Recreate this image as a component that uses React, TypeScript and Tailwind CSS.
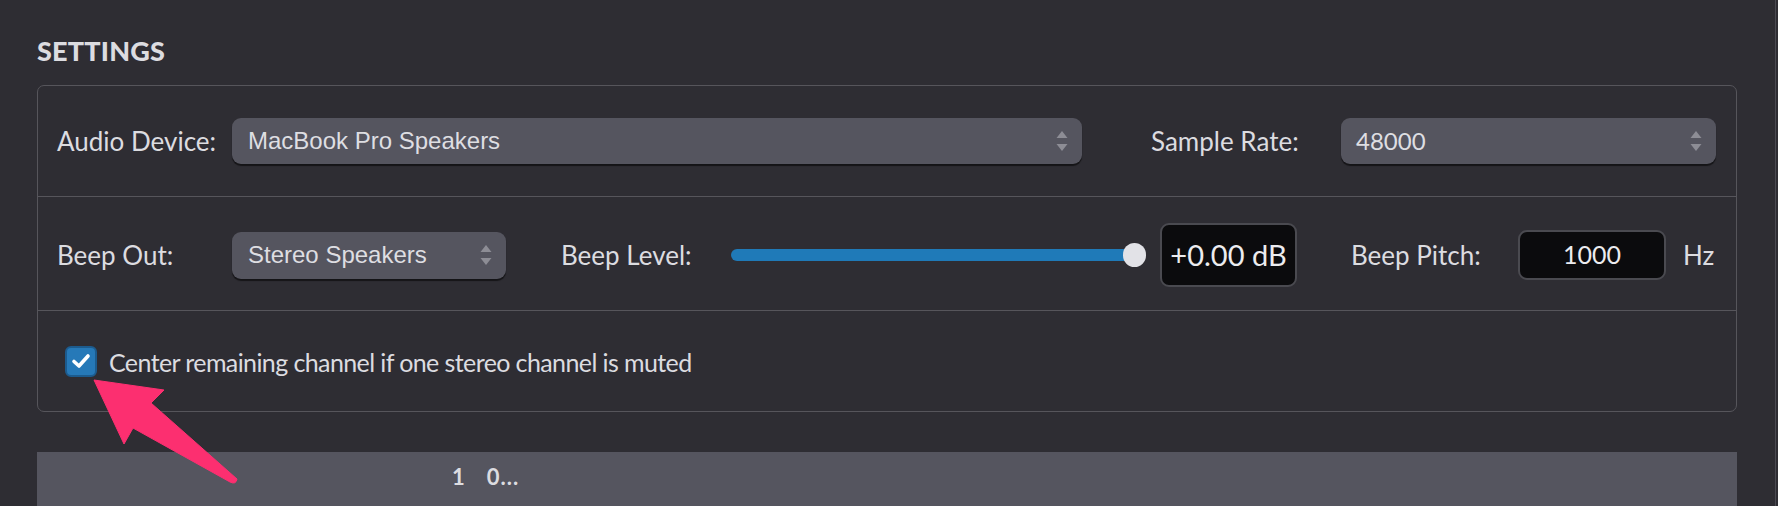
import React from "react";

const labelFont = { fontFamily: "Lato, 'Noto Sans', sans-serif" } as const;
const selFont = { fontFamily: "'Liberation Sans', Arial, sans-serif" } as const;

function Arrows() {
  return (
    <svg width="12" height="24" viewBox="0 0 12 24" className="shrink-0">
      <path d="M6 2 L11.5 9 L0.5 9 Z" fill="#8d8d95" />
      <path d="M0.5 15 L11.5 15 L6 22 Z" fill="#8d8d95" />
    </svg>
  );
}

function Select({ w, h, text, font }: { w: string; h: string; text: string; font: React.CSSProperties }) {
  return (
    <div
      className={`${w} ${h} shrink-0 rounded-[9px] bg-[#55555f] shadow-[0_2px_1px_rgba(0,0,0,0.55)] flex items-center justify-between pl-[16px] pr-[14px]`}
    >
      <span className="text-[24px] text-[#dedee2] leading-none" style={font}>
        {text}
      </span>
      <Arrows />
    </div>
  );
}

export default function App() {
  return (
    <div className="w-[1778px] h-[506px] overflow-hidden bg-[#2e2d33] relative flex" style={labelFont}>
      <div className="w-[1776px] h-full border-r border-[#4c4b52] pl-[37px] pt-[35px] flex flex-col">
        <div className="text-[27px] leading-[32px] font-black text-[#dcdce0] tracking-[0.2px]">SETTINGS</div>

        <div className="mt-[18px] w-[1700px] rounded-[7px] border border-[#56555b] flex flex-col text-[#dcdce0]">
          {/* Row 1 */}
          <div className="h-[111px] border-b border-[#56555b] flex items-center pl-[19px]">
            <div className="w-[175px] shrink-0 text-[26px]">Audio Device:</div>
            <Select w="w-[850px]" h="h-[46px]" text="MacBook Pro Speakers" font={selFont} />
            <div className="ml-[69px] w-[190px] shrink-0 text-[26px]">Sample Rate:</div>
            <div className="w-[375px] h-[46px] shrink-0 rounded-[9px] bg-[#55555f] shadow-[0_2px_1px_rgba(0,0,0,0.55)] flex items-center justify-between pl-[15px] pr-[14px]">
              <span className="text-[24px] text-[#dedee2] leading-none">48000</span>
              <Arrows />
            </div>
          </div>

          {/* Row 2 */}
          <div className="h-[114px] border-b border-[#56555b] flex items-center pl-[19px] pt-[3px]">
            <div className="w-[175px] shrink-0 text-[26px]">Beep Out:</div>
            <Select w="w-[274px]" h="h-[47px]" text="Stereo Speakers" font={selFont} />
            <div className="ml-[55px] w-[170px] shrink-0 text-[26px]">Beep Level:</div>
            <div className="w-[415px] h-[24px] shrink-0 flex items-center">
              <div className="flex-1 h-[12px] rounded-full bg-[#1f7ab8]" />
              <div className="w-[23px] h-[24px] rounded-full bg-[#e2e2e7] -ml-[11px]" />
            </div>
            <div className="ml-[14px] w-[137px] h-[64px] shrink-0 rounded-[9px] border-2 border-[#4a4a50] bg-[#0b0b0d] flex items-center justify-center text-[29px] text-[#ececef]">
              +0.00 dB
            </div>
            <div className="ml-[54px] w-[167px] shrink-0 text-[26px]">Beep Pitch:</div>
            <div className="w-[148px] h-[50px] shrink-0 rounded-[9px] border-2 border-[#4a4a50] bg-[#0b0b0d] flex items-center justify-center text-[25px] text-[#ececef]">
              1000
            </div>
            <div className="ml-[17px] text-[26px]">Hz</div>
          </div>

          {/* Row 3 */}
          <div className="h-[100px] flex items-center pl-[27px]">
            <div className="w-[32px] h-[31px] shrink-0 rounded-[6px] bg-[#2679b8] border-2 border-[#1c5b8e] flex items-center justify-center">
              <svg width="20" height="16" viewBox="0 0 20 16">
                <path d="M3 8.5 L8 13 L17 3" fill="none" stroke="#ffffff" strokeWidth="3.6" strokeLinecap="round" strokeLinejoin="round" />
              </svg>
            </div>
            <div className="ml-[12px] pt-[3px] text-[25px] tracking-[-0.6px]">Center remaining channel if one stereo channel is muted</div>
          </div>
        </div>

        <div className="mt-[40px] w-[1700px] h-[60px] shrink-0 bg-[#55555f] flex items-start pt-[11px]">
          <div className="ml-[415px] text-[22px] font-bold text-[#dcdce0] leading-[28px] flex gap-[22px]">
            <span>1</span>
            <span className="tracking-[1px]">0...</span>
          </div>
        </div>
      </div>

      {/* pink annotation arrow */}
      <svg className="absolute left-0 top-0 pointer-events-none" width="300" height="506" viewBox="0 0 300 506">
        <path
          d="M94 380 L164 390 L151 403 L237 479 Q236 485 230 482 L133 428 L124 444 Z"
          fill="#fc2f70"
          stroke="#fc2f70"
          strokeWidth="1"
          strokeLinejoin="round"
        />
      </svg>
    </div>
  );
}
